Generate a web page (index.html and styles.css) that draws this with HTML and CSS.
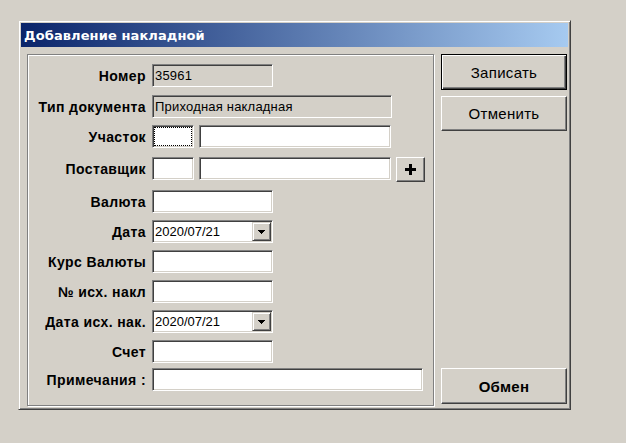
FILE: index.html
```html
<!DOCTYPE html>
<html lang="ru">
<head>
<meta charset="utf-8">
<title>Добавление накладной</title>
<link rel="stylesheet" href="styles.css">
</head>
<body>
<div class="window">
  <div class="titlebar"><span class="title">Добавление накладной</span></div>
  <div class="client">
    <div class="group">
      <div class="form">
        <div class="lbl">Номер</div>
        <div class="cell"><div class="field ro w-short">35961</div></div>

        <div class="lbl">Тип документа</div>
        <div class="cell"><div class="field ro w-type">Приходная накладная</div></div>

        <div class="lbl">Участок</div>
        <div class="cell"><div class="field w-code focus"></div><div class="field w-name"></div></div>

        <div class="lbl">Поставщик</div>
        <div class="cell"><div class="field w-code"></div><div class="field w-name"></div>
          <div class="btn plus"><svg width="11" height="11" viewBox="0 0 11 11"><rect x="0" y="4" width="11" height="3" fill="#000"/><rect x="4" y="0" width="3" height="11" fill="#000"/></svg></div>
        </div>

        <div class="lbl">Валюта</div>
        <div class="cell"><div class="field w-short"></div></div>

        <div class="lbl">Дата</div>
        <div class="cell"><div class="field w-short combo"><span class="ctext">2020/07/21</span><span class="drop"><svg width="7" height="4" viewBox="0 0 7 4" shape-rendering="crispEdges"><path d="M0 0h7v1h-1v1h-1v1h-1v1h-1v-1h-1v-1h-1v-1h-1z" fill="#000"/></svg></span></div></div>

        <div class="lbl">Курс Валюты</div>
        <div class="cell"><div class="field w-short"></div></div>

        <div class="lbl">№ исх. накл</div>
        <div class="cell"><div class="field w-short"></div></div>

        <div class="lbl">Дата исх. нак.</div>
        <div class="cell"><div class="field w-short combo"><span class="ctext">2020/07/21</span><span class="drop"><svg width="7" height="4" viewBox="0 0 7 4" shape-rendering="crispEdges"><path d="M0 0h7v1h-1v1h-1v1h-1v1h-1v-1h-1v-1h-1v-1h-1z" fill="#000"/></svg></span></div></div>

        <div class="lbl">Счет</div>
        <div class="cell"><div class="field w-short"></div></div>

        <div class="lbl">Примечания :</div>
        <div class="cell"><div class="field w-note"></div></div>
      </div>
    </div>
    <div class="buttons">
      <div class="btn big default">Записать</div>
      <div class="btn big cancel">Отменить</div>
      <div class="btn big bold exchange">Обмен</div>
    </div>
  </div>
</div>
</body>
</html>
```

FILE: styles.css
```css
* { box-sizing: border-box; }

html, body {
  margin: 0;
  padding: 0;
  background: #d4d0c8;
  font-family: "Liberation Sans", Arial, sans-serif;
  color: #000;
}

body {
  padding: 20px 0 0 18px;
  width: 626px;
  height: 443px;
  overflow: hidden;
}

.window {
  width: 553px;
  height: 390px;
  border: 1px solid;
  border-color: #d4d0c8 #404040 #404040 #d4d0c8;
  box-shadow: inset 1px 1px 0 #fff, inset -1px -1px 0 #808080;
  padding: 2px;
  display: flex;
  flex-direction: column;
}

.titlebar {
  height: 24px;
  background: linear-gradient(to right, #0a246a, #a6caf0);
  display: flex;
  align-items: center;
  padding-left: 3px;
  flex: none;
}

.title {
  color: #fff;
  font-family: "DejaVu Sans", Tahoma, sans-serif;
  font-weight: bold;
  font-size: 13px;
  letter-spacing: 0.1px;
}

.client {
  display: flex;
  padding: 7px 1px 0 6px;
  flex: 1;
}

.group {
  width: 407px;
  height: 352px;
  border: 1px solid #808080;
  box-shadow: inset 1px 1px 0 #fff, 1px 1px 0 #fff;
  flex: none;
}

.form {
  display: grid;
  grid-template-columns: 118px 1fr;
  grid-template-rows: 31px 30px 32px 33px 30px 30px 30px 30px 30px 28px 23px;
  column-gap: 6px;
  padding-top: 9px;
}

.lbl {
  height: 23px;
  display: flex;
  align-items: center;
  justify-content: flex-end;
  font-weight: bold;
  font-size: 14px;
  white-space: nowrap;
  padding-top: 1px;
  letter-spacing: 0.4px;
}

.cell {
  display: flex;
  align-items: flex-start;
  gap: 5px;
}

.field {
  height: 23px;
  background: #fff;
  border: 1px solid;
  border-color: #808080 #fff #fff #808080;
  box-shadow: inset 1px 1px 0 #404040, inset -1px -1px 0 #d4d0c8;
  font-size: 13px;
  line-height: 19px;
  padding: 1px 0 0 2px;
  white-space: nowrap;
  letter-spacing: 0.2px;
}

.field.ro { background: #d4d0c8; }

.w-short { width: 121px; }
.w-type { width: 240px; }
.w-code { width: 42px; }
.w-name { width: 192px; }
.w-note { width: 271px; }

.focus {
  outline: 1px dotted #000;
  outline-offset: -3px;
}

.combo {
  display: flex;
  padding: 1px 0 0 2px;
}

.ctext {
  flex: 1;
  font-size: 13px;
  letter-spacing: 0;
  line-height: 19px;
}

.drop {
  width: 19px;
  height: 19px;
  margin-right: 1px;
  background: #d4d0c8;
  border: 1px solid;
  border-color: #d4d0c8 #404040 #404040 #d4d0c8;
  box-shadow: inset 1px 1px 0 #fff, inset -1px -1px 0 #808080;
  display: flex;
  align-items: center;
  justify-content: center;
}

.btn {
  background: #d4d0c8;
  border: 1px solid;
  border-color: #fff #404040 #404040 #fff;
  box-shadow: inset -1px -1px 0 #808080;
  display: flex;
  align-items: center;
  justify-content: center;
}

.plus {
  width: 29px;
  height: 25px;
}

.buttons {
  width: 126px;
  height: 352px;
  margin-left: 7px;
  display: flex;
  flex-direction: column;
  flex: none;
}

.big {
  font-size: 15px;
  letter-spacing: 0.3px;
  height: 36px;
}

.default {
  border: 1px solid #000;
  box-shadow: inset 1px 1px 0 #fff, inset -1px -1px 0 #404040, inset -2px -2px 0 #808080;
}

.cancel {
  margin-top: 6px;
  height: 35px;
}

.bold { font-weight: bold; }

.exchange {
  margin-top: auto;
  margin-bottom: 2px;
}
```
